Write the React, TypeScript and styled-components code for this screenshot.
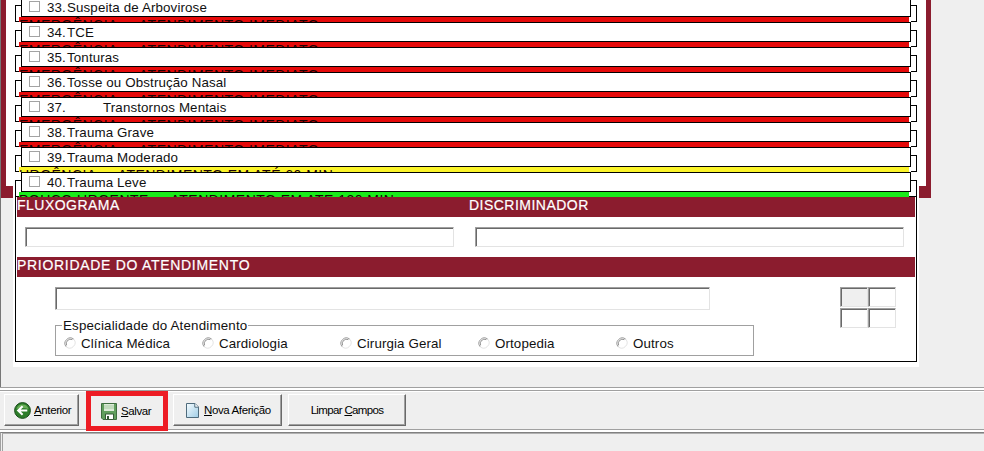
import React from 'react';
import styled, { createGlobalStyle } from 'styled-components';

const maroon = '#8b1c2e';
const face = '#efefef';

const GlobalStyle = createGlobalStyle`
  * { box-sizing: border-box; }
  body { margin: 0; overflow: hidden; background: ${face}; font-family: "Liberation Sans", Arial, sans-serif; color: #111; }
`;

const Window = styled.div`
  width: 984px;
  height: 451px;
  overflow: hidden;
  display: flex;
  flex-direction: column;
  background: ${face};
`;

const Workspace = styled.main`
  height: 387px;
  flex: none;
  overflow: hidden;
  border-left: 1px solid #777;
`;

const Frame = styled.div`
  width: 930px;
  height: 198px;
  background: linear-gradient(#fff, #fff) 5px 0 / 920px 186px no-repeat, ${maroon};
`;

const Sheet = styled.div`
  width: 906px;
  height: 367px;
  margin: -198px 0 0 12px;
  padding: 0 2px;
  background: #fff;
  overflow: hidden;
  position: relative;
`;

const List = styled.ul`
  position: relative;
  z-index: 1;
  list-style: none;
  margin: -3px 0 0;
  padding: 0;
`;

const Row = styled.li`
  display: grid;
  grid-template-columns: 6px 890px 6px;
  height: 25px;
`;

const Bracket = styled.span<{ $side: 'left' | 'right' }>`
  margin-top: 8px;
  height: 17px;
  border: 1px solid #000;
  border-${(p) => (p.$side === 'left' ? 'right' : 'left')}: 0;
`;

const Item = styled.label`
  display: flex;
  align-items: flex-start;
  height: 20px;
  padding-left: 7px;
  border: 1px solid #000;
  background: #fff;
  font-size: 13.33px;
  letter-spacing: 0.13px;
  line-height: 19px;
`;

const Check = styled.span`
  width: 11px;
  height: 11px;
  margin: 3px 7px 0 0;
  border: 1px solid #a3a3a3;
  background: #fff;
`;

const ItemNumber = styled.span`
  width: 20px;
`;

const ItemName = styled.span<{ $indent?: boolean }>`
  margin-left: ${(p) => (p.$indent ? 36 : 0)}px;
`;

const Band = styled.div<{ $color: string }>`
  height: 5px;
  width: 890px;
  margin-left: -2px;
  overflow: hidden;
  background: ${(p) => p.$color};
  color: #1c0303;
  font-size: 14px;
  line-height: 16px;
  letter-spacing: 0.47px;
  white-space: pre;
`;

const Form = styled.section`
  width: 902px;
  height: 166px;
  margin-top: -1px;
  padding: 0 1px;
  border: 1px solid #000;
`;

const SectionBar = styled.h2<{ $wide?: boolean }>`
  display: grid;
  grid-template-columns: 452px 1fr;
  height: 20px;
  margin: 0;
  background: ${maroon};
  color: #fff;
  font-size: 14px;
  font-weight: 400;
  line-height: 17px;
  letter-spacing: ${(p) => (p.$wide ? 0.7 : 0.48)}px;
  white-space: nowrap;
  -webkit-text-stroke: 0.2px currentColor;
`;

const Fields = styled.div`
  display: flex;
  gap: 21px;
  padding: 10px 8px;
`;

const Sunken = styled.div<{ $w: number; $h: number; $shaded?: boolean }>`
  width: ${(p) => p.$w}px;
  height: ${(p) => p.$h}px;
  border: 1px solid;
  border-color: #a0a0a0 #e3e3e3 #e3e3e3 #a0a0a0;
  box-shadow: inset 1px 1px 0 #696969;
  background: ${(p) => (p.$shaded ? face : '#fff')};
`;

const Priority = styled.div`
  display: grid;
  grid-template-columns: 699px 56px;
  column-gap: 86px;
  padding: 10px 0 0 38px;
`;

const Cells = styled.div`
  display: grid;
  grid-template-columns: 28px 28px;
  grid-auto-rows: 20px;
  row-gap: 1px;
  align-content: start;
`;

const Specialties = styled.fieldset`
  height: 39px;
  min-width: 0;
  margin: 7px 0 0;
  padding: 0 0 0 8px;
  border: 1px solid #a0a0a0;
  font-size: 13.33px;
`;

const Legend = styled.legend`
  padding: 1px 1px 0;
  margin-left: -2px;
  height: 16px;
  line-height: 16px;
  letter-spacing: 0.18px;
`;

const Options = styled.div`
  display: grid;
  grid-template-columns: repeat(5, 138px);
  margin-top: 2px;
`;

const Option = styled.label`
  display: flex;
  align-items: flex-start;
  gap: 5px;
  line-height: 18px;
  letter-spacing: 0.12px;
  white-space: nowrap;

  svg {
    margin-top: 2px;
  }
`;

const Toolbar = styled.nav`
  height: 45px;
  flex: none;
  display: flex;
  align-items: flex-start;
  padding: 1px 0 0 4px;
  border-top: 1px solid #a0a0a0;
  background:
    linear-gradient(#fff, #fff) 0 0 / 100% 2px no-repeat,
    linear-gradient(#a0a0a0, #a0a0a0) 0 2px / 100% 1px no-repeat,
    linear-gradient(#fff, #fff) 0 3px / 100% 1px no-repeat,
    linear-gradient(#a0a0a0, #a0a0a0) 0 41px / 100% 1px no-repeat,
    linear-gradient(#fff, #fff) 0 42px / 100% 2px no-repeat,
    ${face};
`;

const Button = styled.button<{ $w: number; $after: number; $pad?: number; $gap?: number; $plain?: boolean }>`
  display: flex;
  align-items: center;
  justify-content: ${(p) => (p.$plain ? 'center' : 'flex-start')};
  gap: ${(p) => p.$gap ?? 4}px;
  width: ${(p) => p.$w}px;
  height: 32px;
  margin: 5px ${(p) => p.$after}px 0 0;
  padding: 0 0 0 ${(p) => p.$pad ?? 0}px;
  border: 1px solid;
  border-color: #fff #696969 #696969 #fff;
  box-shadow: inset -1px -1px 0 #a0a0a0;
  background: ${face};
  color: #000;
  font: 11.5px/14px "Liberation Sans", Arial, sans-serif;
  letter-spacing: ${(p) => (p.$plain ? -0.65 : -0.38)}px;
  white-space: nowrap;
`;

const Highlight = styled.div`
  width: 82px;
  height: 40px;
  margin: 2px 5px 0 0;
  border: 5px solid #ed1c24;
  display: flex;

  ${Button} {
    width: 72px;
    height: 30px;
    margin: 0;
    border: 0;
    box-shadow: none;
  }
`;

const StatusBar = styled.footer`
  flex: 1;
  border-top: 1px solid #808080;
  border-left: 1px solid #a0a0a0;
  background: ${face};
  padding: 0 0 0 1px;

  &::before {
    content: '';
    display: block;
    height: 100%;
    border-top: 1px solid #b0b0b0;
    border-left: 1px solid #a0a0a0;
  }
`;

const Radio = () => (
  <svg width="12" height="12" viewBox="0 0 12 12" fill="none">
    <path d="M2.2 9.8A5.4 5.4 0 0 1 9.8 2.2" stroke="#9a9a9a" />
    <path d="M2.6 8.4A4.4 4.4 0 0 1 8.4 2.6" stroke="#777" strokeWidth="0.8" />
    <path d="M9.8 2.2A5.4 5.4 0 0 1 2.2 9.8" stroke="#e3e3e3" />
  </svg>
);

const BackIcon = () => (
  <svg width="17" height="17" viewBox="0 0 17 17">
    <circle cx="8.5" cy="8.5" r="7.9" fill="#2d7d2a" stroke="#1d4f1e" />
    <path d="M2.5 7A6.3 6.3 0 0 1 14.5 7Q8 5 2.5 7Z" fill="#68ad57" />
    <path d="M13.3 8.5H4.5M8.6 4.2L4.2 8.5l4.4 4.3" fill="none" stroke="#fff" strokeWidth="2.1" />
  </svg>
);

const SaveIcon = () => (
  <svg width="16" height="17" viewBox="0 0 16 17">
    <path d="M.5.5h15v16H2l-1.5-1.5Z" fill="#619f5e" stroke="#3f6e40" />
    <path d="M3 1h10v7H3Z" fill="#dcebd8" />
    <path d="M3 3h10M3 5h10" stroke="#a8cba4" />
    <path d="M4.5 11h8v5.5h-8Z" fill="#fff" stroke="#365a37" />
    <path d="M6 13h2v3H6Z" fill="#365a37" />
  </svg>
);

const PageIcon = () => (
  <svg width="13" height="15" viewBox="0 0 13 15">
    <defs>
      <linearGradient id="page" x2="1" y2="1">
        <stop stopColor="#f6fcff" />
        <stop offset="1" stopColor="#9fcde6" />
      </linearGradient>
    </defs>
    <path d="M.5.5H9L12.5 4v10.5H.5Z" fill="url(#page)" stroke="#4e6b7c" />
    <path d="M8.8.5V4.2h3.7" fill="#fff" stroke="#4e6b7c" />
  </svg>
);

const red = { color: '#e60a0a', text: 'EMERGÊNCIA  -  ATENDIMENTO IMEDIATO' };
const yellow = { color: '#fbf42a', text: 'URGÊNCIA  -  ATENDIMENTO EM ATÉ 60 MIN' };
const green = { color: '#1aeb1a', text: 'POUCO URGENTE  -  ATENDIMENTO EM ATE 120 MIN' };

const items = [
  { n: 33, name: 'Suspeita de Arbovirose', level: red },
  { n: 34, name: 'TCE', level: red },
  { n: 35, name: 'Tonturas', level: red },
  { n: 36, name: 'Tosse ou Obstrução Nasal', level: red },
  { n: 37, name: 'Transtornos Mentais', level: red, indent: true },
  { n: 38, name: 'Trauma Grave', level: red },
  { n: 39, name: 'Trauma Moderado', level: yellow },
  { n: 40, name: 'Trauma Leve', level: green },
];

const specialties = ['Clínica Médica', 'Cardiologia', 'Cirurgia Geral', 'Ortopedia', 'Outros'];

export default function App() {
  return (
    <Window>
      <GlobalStyle />
      <Workspace>
        <Frame />
        <Sheet>
          <List>
            {items.map((item) => (
              <Row key={item.n}>
                <Bracket $side="left" />
                <div>
                  <Item>
                    <Check />
                    <ItemNumber>{item.n}.</ItemNumber>
                    <ItemName $indent={item.indent}>{item.name}</ItemName>
                  </Item>
                  <Band $color={item.level.color}>{item.level.text}</Band>
                </div>
                <Bracket $side="right" />
              </Row>
            ))}
          </List>
          <Form>
            <SectionBar>
              <span>FLUXOGRAMA</span>
              <span>DISCRIMINADOR</span>
            </SectionBar>
            <Fields>
              <Sunken $w={429} $h={20} />
              <Sunken $w={429} $h={20} />
            </Fields>
            <SectionBar $wide>
              <span>PRIORIDADE DO ATENDIMENTO</span>
            </SectionBar>
            <Priority>
              <div>
                <Sunken $w={655} $h={23} />
                <Specialties>
                  <Legend>Especialidade do Atendimento</Legend>
                  <Options>
                    {specialties.map((name) => (
                      <Option key={name}>
                        <Radio />
                        {name}
                      </Option>
                    ))}
                  </Options>
                </Specialties>
              </div>
              <Cells>
                <Sunken $w={28} $h={20} $shaded />
                <Sunken $w={28} $h={20} />
                <Sunken $w={28} $h={20} />
                <Sunken $w={28} $h={20} />
              </Cells>
            </Priority>
          </Form>
        </Sheet>
      </Workspace>
      <Toolbar>
        <Button $w={75} $after={7} $pad={9} $gap={3}>
          <BackIcon />
          <span><u>A</u>nterior</span>
        </Button>
        <Highlight>
          <Button $w={72} $after={0} $pad={10}>
            <SaveIcon />
            <span><u>S</u>alvar</span>
          </Button>
        </Highlight>
        <Button $w={109} $after={6} $pad={12} $gap={5}>
          <PageIcon />
          <span><u>N</u>ova Aferição</span>
        </Button>
        <Button $w={118} $after={0} $plain>
          <span>Limpar <u>C</u>ampos</span>
        </Button>
      </Toolbar>
      <StatusBar />
    </Window>
  );
}
